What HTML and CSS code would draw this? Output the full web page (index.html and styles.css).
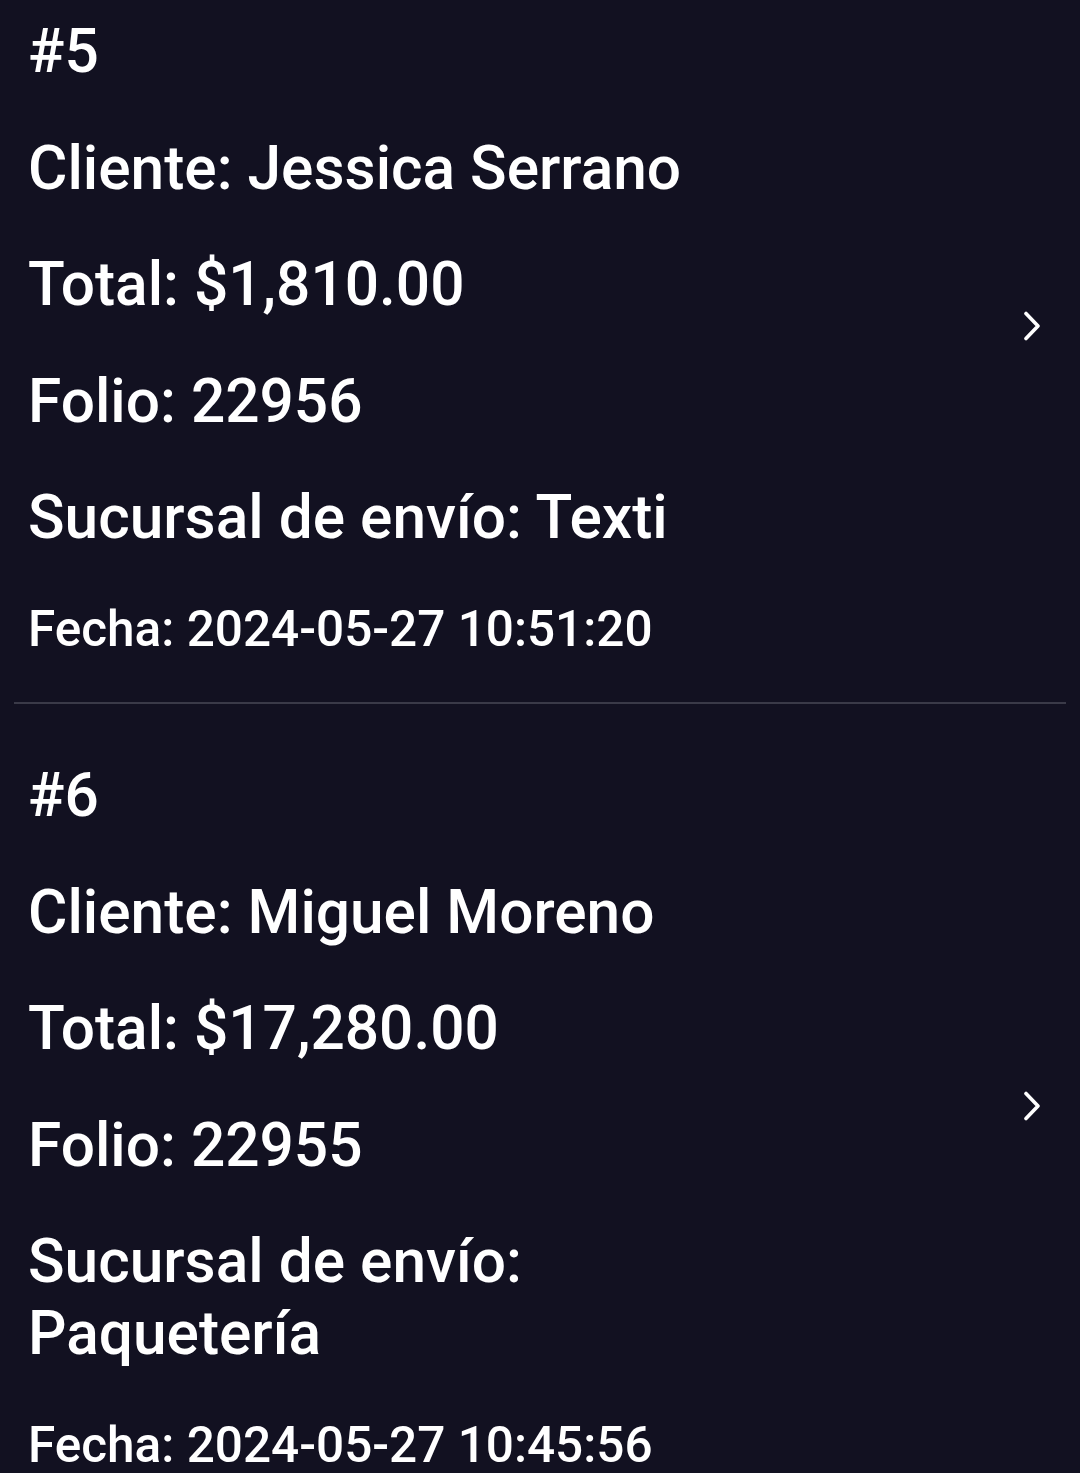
FILE: index.html
```html
<!DOCTYPE html>
<html>
  <head>
    <meta charset="utf-8">
    <title>Pedidos</title>
    <meta name="viewport" content="width=device-width, initial-scale=1">
    <link rel="stylesheet" href="styles.css">
  </head>
  <body>
    <div class="orders">
      <div class="order">
        <div class="order__info">
          <p class="order__line">#5</p>
          <p class="order__line">Cliente: Jessica Serrano</p>
          <p class="order__line">Total: $1,810.00</p>
          <p class="order__line">Folio: 22956</p>
          <p class="order__line">Sucursal de envío: Texti</p>
          <p class="order__date">Fecha: 2024-05-27 10:51:20</p>
        </div>
        <svg class="order__chevron" width="20" height="30" viewBox="0 0 20 30">
          <polyline points="5,2.5 17,15 5,27.5" fill="none" stroke="#fff" stroke-width="3.6" stroke-linecap="round" stroke-linejoin="round" />
        </svg>
      </div>

      <div class="order">
        <div class="order__info">
          <p class="order__line">#6</p>
          <p class="order__line">Cliente: Miguel Moreno</p>
          <p class="order__line">Total: $17,280.00</p>
          <p class="order__line">Folio: 22955</p>
          <p class="order__line">Sucursal de envío:<br>Paquetería</p>
          <p class="order__date">Fecha: 2024-05-27 10:45:56</p>
        </div>
        <svg class="order__chevron" width="20" height="30" viewBox="0 0 20 30">
          <polyline points="5,2.5 17,15 5,27.5" fill="none" stroke="#fff" stroke-width="3.6" stroke-linecap="round" stroke-linejoin="round" />
        </svg>
      </div>
    </div>
  </body>
</html>
```

FILE: styles.css
```css
/* Base */
* {
  box-sizing: border-box;
}

html {
  font-family: Roboto, "Noto Sans", sans-serif;
}

body {
  background-color: #121121;
  color: #fff;
  margin: 0;
  overflow: hidden;
}

p {
  margin: 0;
}

/* List (scrolled a little past the first order) */
.orders {
  margin-top: -40px;
}

.order {
  align-items: center;
  border-bottom: 2px solid #3a3a48;
  display: flex;
  margin: 0 14px;
  padding: 56px 25px 43.5px 14px;
}

.order__info {
  flex: 1;
}

.order__line {
  font-size: 60.4px;
  font-weight: 500;
  line-height: 72px;
  margin-bottom: 44.5px;
}

.order__date {
  font-size: 49.5px;
  font-weight: 500;
  line-height: 60px;
}

.order__chevron {
  display: block;
  flex: none;
  margin-bottom: 22px;
}
```
